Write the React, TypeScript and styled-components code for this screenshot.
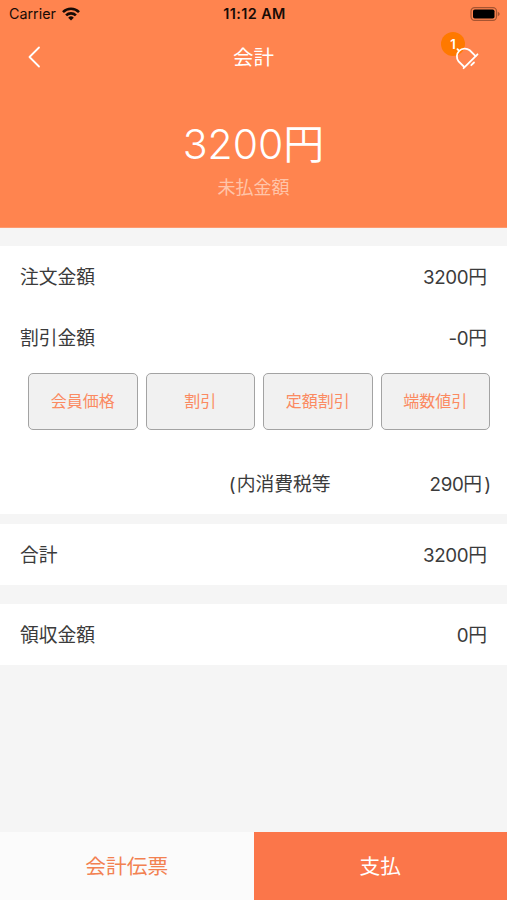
import React from "react";
import styled, { createGlobalStyle } from "styled-components";

const GlobalStyle = createGlobalStyle`
  *, *::before, *::after { box-sizing: border-box; }
  body { margin: 0; background: #f5f5f5; }
`;

const Screen = styled.div`
  width: 100%;
  height: 900px;
  display: flex;
  flex-direction: column;
  overflow: hidden;
  background: #f5f5f5;
  color: #3b3b3b;
  font-family: Inter, "Noto Sans CJK JP", sans-serif;
  font-size: 18.8px;
  white-space: nowrap;
`;

const Hero = styled.header`
  height: 228px;
  flex: none;
  background: #ff844f;
  border-bottom: 1px solid #fd9a70;
  color: #fff;
`;

const StatusBar = styled.div`
  display: grid;
  grid-template-columns: 1fr auto 1fr;
  align-items: center;
  height: 27px;
  padding: 0 7px 0 9px;
  color: #170b06;
  font-size: 14.3px;
`;

const Carrier = styled.div`
  display: flex;
  align-items: center;
  gap: 6px;
`;

const Clock = styled.div`
  font-weight: 600;
  font-size: 14.4px;
  letter-spacing: 0.4px;
`;

const BatteryIcon = styled.svg`
  justify-self: end;
`;

const NavBar = styled.nav`
  display: grid;
  grid-template-columns: 1fr auto 1fr;
  align-items: center;
  height: 60px;
  padding: 0 27px;
`;

const Title = styled.h1`
  margin: 0;
  padding-top: 1px;
  font-size: 20.5px;
  font-weight: 400;
  line-height: 31px;
`;

const BellButton = styled.div`
  position: relative;
  justify-self: end;
  width: 26px;
  height: 26px;
`;

const Badge = styled.span`
  position: absolute;
  left: -13px;
  top: -12px;
  width: 24px;
  height: 24px;
  border-radius: 50%;
  background: #ff7900;
  font-size: 13px;
  font-weight: 600;
  line-height: 25px;
  text-align: center;
`;

const BellIcon = styled.svg`
  position: relative;
  display: block;
`;

const Balance = styled.div`
  display: flex;
  flex-direction: column;
  align-items: center;
  padding-top: 27px;
`;

const BalanceAmount = styled.div`
  font-size: 41px;
  font-weight: 350;
  line-height: 60px;
`;

const BalanceLabel = styled.div`
  color: #ffc4a9;
  font-size: 18px;
  line-height: 28px;
`;

const Card = styled.section<{ $gap: number }>`
  flex: none;
  margin-top: ${(p) => p.$gap}px;
  background: #fff;
`;

const Row = styled.div`
  display: flex;
  align-items: center;
  justify-content: space-between;
  height: 61px;
  padding: 0 20px 2px;
`;

const Digits = styled.span<{ $spacing: number }>`
  letter-spacing: ${(p) => p.$spacing}px;
`;

const Discounts = styled.div`
  display: grid;
  grid-template-columns: repeat(4, 1fr);
  gap: 8px;
  height: 62px;
  padding: 5px 17px 0 28px;
`;

const DiscountButton = styled.button`
  height: 57px;
  padding: 0 0 3px;
  border: 1px solid #a3a3a3;
  border-radius: 5px;
  background: #f1f1f1;
  color: #fb8a61;
  font: inherit;
  font-size: 16px;
`;

const TaxRow = styled.div`
  display: flex;
  align-items: center;
  justify-content: flex-end;
  gap: 99px;
  height: 84px;
  padding: 21px 16px 0 0;
`;

const OpenParen = styled.span`
  margin-right: 1px;
`;

const CloseParen = styled.span`
  margin-left: 2px;
`;

const Actions = styled.footer`
  display: grid;
  grid-template-columns: 1fr 1fr;
  flex: none;
  height: 68px;
  margin-top: auto;
`;

const Action = styled.button<{ $primary?: boolean }>`
  padding: 0 0 2px;
  border: 0;
  background: ${(p) => (p.$primary ? "#fb764a" : "#fbfbfb")};
  color: ${(p) => (p.$primary ? "#fff" : "#f28151")};
  font: inherit;
  font-size: 20.7px;
`;

function Yen({ value, spacing = -0.4 }: { value: string; spacing?: number }) {
  return (
    <span>
      <Digits $spacing={spacing}>{value}</Digits>円
    </span>
  );
}

const discounts = ["会員価格", "割引", "定額割引", "端数値引"];

export default function App() {
  return (
    <>
      <GlobalStyle />
      <Screen>
        <Hero>
          <StatusBar>
            <Carrier>
              Carrier
              <svg width="18" height="14" viewBox="0 0 18 14">
                <g fill="none" stroke="#170b06" strokeWidth="2.6">
                  <path d="M1 5.1a11.3 11.3 0 0 1 16 0" />
                  <path d="M4.1 8.4a6.9 6.9 0 0 1 9.8 0" />
                </g>
                <path d="M6.2 10.7a4 4 0 0 1 5.6 0L9 13.6z" fill="#170b06" />
              </svg>
            </Carrier>
            <Clock>11:12 AM</Clock>
            <BatteryIcon width="30" height="14" viewBox="0 0 30 14">
              <rect x="1" y=".6" width="25.5" height="12.8" rx="3.6" fill="none" stroke="#a65431" strokeWidth="1.2" />
              <rect x="3" y="2.5" width="21.5" height="9" rx="1.8" fill="#000" />
              <path d="M27.8 4.8c2.4.8 2.4 3.6 0 4.4z" fill="#a65431" />
            </BatteryIcon>
          </StatusBar>
          <NavBar>
            <svg width="14" height="22" viewBox="0 0 14 22">
              <path d="M12 1.5 2.5 11 12 20.5" fill="none" stroke="#fff" strokeWidth="1.8" strokeLinecap="round" strokeLinejoin="round" />
            </svg>
            <Title>会計</Title>
            <BellButton>
              <Badge>1</Badge>
              <BellIcon width="26" height="26" viewBox="0 0 26 26" fill="none" stroke="#fff" strokeWidth="1.8" strokeLinecap="round">
                <path d="M9.6 24.2 23.5 10.3" />
                <path d="M10.3 23 4.6 17.4A7.9 7.9 0 0 1 15.7 6.3L21.6 12.1" />
                <path d="M4.3 6 3.4 5.1" />
                <path d="M17.3 21.2 20 18.5" />
              </BellIcon>
            </BellButton>
          </NavBar>
          <Balance>
            <BalanceAmount><Yen value="3200" spacing={0} /></BalanceAmount>
            <BalanceLabel>未払金額</BalanceLabel>
          </Balance>
        </Hero>
        <Card $gap={18}>
          <Row><span>注文金額</span><Yen value="3200" /></Row>
          <Row><span>割引金額</span><Yen value="-0" /></Row>
          <Discounts>
            {discounts.map((label) => <DiscountButton key={label}>{label}</DiscountButton>)}
          </Discounts>
          <TaxRow>
            <span><OpenParen>(</OpenParen>内消費税等</span>
            <span><Yen value="290" /><CloseParen>)</CloseParen></span>
          </TaxRow>
        </Card>
        <Card $gap={10}>
          <Row><span>合計</span><Yen value="3200" /></Row>
        </Card>
        <Card $gap={19}>
          <Row><span>領収金額</span><Yen value="0" /></Row>
        </Card>
        <Actions>
          <Action>会計伝票</Action>
          <Action $primary>支払</Action>
        </Actions>
      </Screen>
    </>
  );
}
